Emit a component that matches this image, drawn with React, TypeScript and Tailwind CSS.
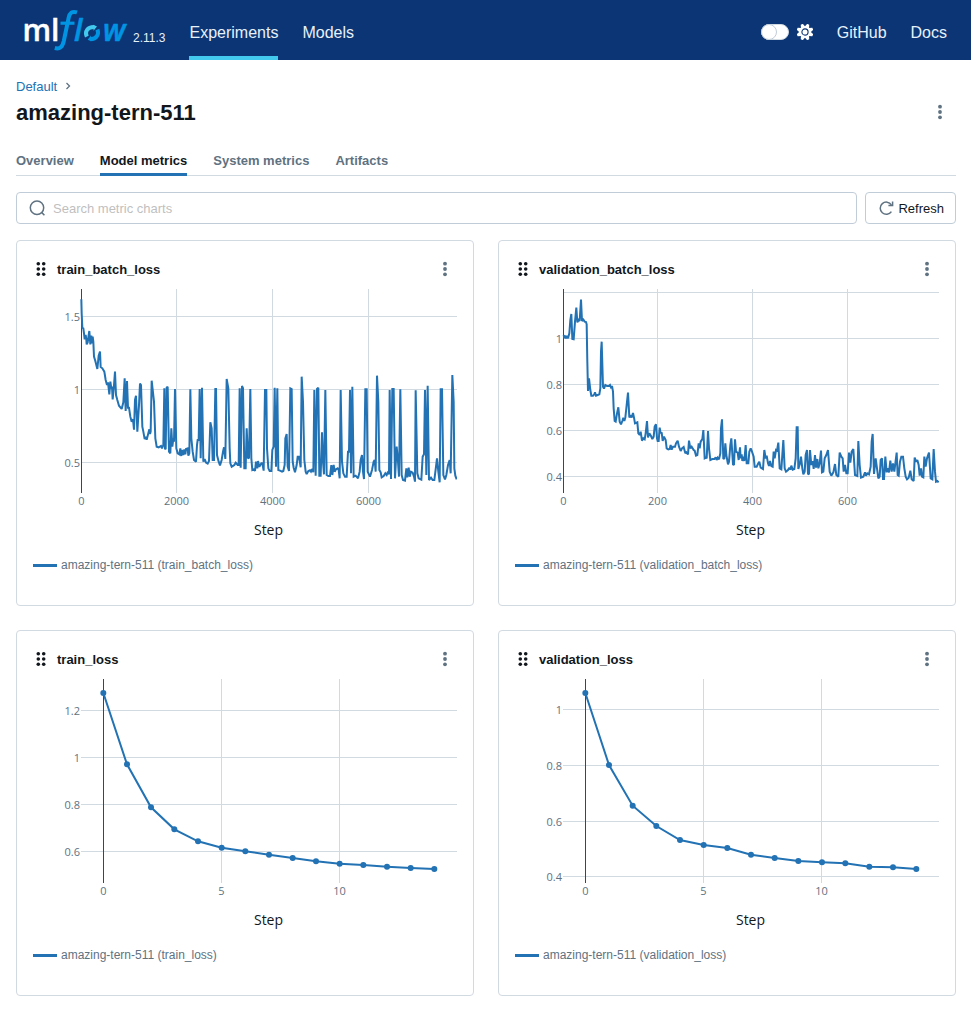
import React from "react";

type Tick = { at: number; label: string };
type Chart = {
  name: string;
  axisX: number;
  xTicks: Tick[];
  yTicks: Tick[];
  origin: [number, number];
  points: string;
  markers?: boolean;
};

const trainBatch =
  "64,43 65,85 67,128 70,130 72,145 74,163 77,150 79,163 80,178 83,172 86,150 88,138 91,178 94,152 96,175 98,155 100,170 102,215 106,228 109,240 112,252 116,212 120,200 122,246 127,250 133,260 137,285 141,300 144,292 148,328 151,290 154,310 156,305 158,343 162,300 165,260 168,330 172,345 177,362 185,372 190,352 194,280 197,378 201,288 204,368 207,368 211,395 215,410 219,403 222,434 225,345 228,332 232,440 237,360 240,296 243,300 247,425 250,440 254,462 258,455 260,464 265,445 268,433 270,447 272,440 275,287 282,350 286,460 290,485 296,487 303,483 306,490 310,480 313,310 315,490 317,493 320,308 323,305 327,500 331,505 334,430 337,485 340,460 342,470 345,312 349,490 353,505 358,508 361,490 364,513 366,495 370,510 373,493 376,508 378,492 383,490 385,512 388,505 391,313 394,460 398,500 402,525 408,530 411,480 413,465 416,465 419,312 422,520 426,308 430,530 434,522 438,533 443,536 447,528 451,412 455,430 458,525 462,525 466,312 468,312 471,510 476,530 480,541 485,525 489,500 492,487 496,522 500,282 505,310 509,490 511,535 515,545 523,540 527,533 533,540 536,540 539,310 542,548 546,303 549,310 553,550 557,550 560,430 564,520 567,518 571,312 574,520 577,555 582,553 585,558 588,530 592,550 594,528 598,545 " +
  "605,533 608,540 611,557 615,315 619,315 621,490 625,550 629,558 634,558 637,495 641,485 644,308 648,545 652,310 655,555 660,557 666,560 670,558 674,540 676,460 680,447 683,545 687,558 691,310 695,312 698,530 701,548 705,562 710,540 713,515 717,515 722,547 725,275 729,350 733,525 737,560 740,567 745,558 750,556 753,560 757,552 760,562 763,315 767,572 771,312 775,308 778,572 782,572 786,442 789,530 792,568 796,315 800,570 805,573 810,573 814,540 817,570 821,540 824,560 828,553 833,550 836,555 839,580 842,315 846,530 850,565 855,575 860,575 864,500 867,500 870,315 873,565 877,305 881,575 887,572 894,580 899,560 902,525 906,510 909,560 912,582 916,313 920,313 923,560 930,575 936,555 941,530 944,525 947,560 951,272 955,350 958,555 962,562 965,577 971,573 976,565 980,570 984,560 987,568 989,315 993,582 997,312 1001,312 1005,580 1010,485 1014,530 1017,575 1021,313 1025,570 1029,585 1035,587 1039,550 1042,577 1046,548 1049,575 1053,560 1058,563 1062,575 1065,590 1067,316 1072,565 1076,580 1084,584 1088,515 1092,508 1095,315 1099,570 1103,302 1107,585 1113,578 1118,585 1123,585 1128,545 1131,520 1135,560 1139,592 1142,313 1146,313 1150,570 1155,583 1159,570 1164,540 1169,525 1172,565 1177,270 1181,350 1183,550 1186,572 1190,583";

const validationBatch =
  "56,150 58,160 60,152 63,160 66,153 69,160 73,145 76,105 79,87 82,162 86,163 90,110 94,68 97,112 101,105 104,108 108,44 111,108 115,104 119,110 123,111 125,118 127,230 129,318 132,280 136,315 139,332 144,332 148,328 150,322 153,332 158,330 163,328 166,310 168,200 170,170 174,305 177,311 181,300 186,303 192,303 195,300 198,307 201,303 204,320 206,370 209,408 212,410 216,385 220,367 224,410 228,418 232,408 235,398 238,408 241,398 245,360 249,323 253,397 257,393 260,397 264,384 267,398 270,415 277,412 280,445 284,450 287,440 291,467 295,460 299,463 302,445 306,408 309,457 313,445 318,453 322,462 326,455 329,425 333,418 336,460 338,468 341,468 344,428 347,445 350,442 353,468 357,455 362,465 365,490 370,493 374,492 377,480 380,494 384,485 390,485 393,475 398,467 402,485 407,498 411,490 416,486 421,505 424,502 429,508 432,467 436,490 440,485 446,495 449,497 453,512 457,510 461,475 464,490 467,470 472,462 475,435 479,520 483,518 485,520 489,438 492,490 496,525 502,522 508,522 512,517 515,525 518,518 522,523 526,505 528,430 531,403 535,522 538,520 541,475 544,510 549,538 552,530 556,480 559,460 564,538 567,540 570,463 573,500 578,503 581,525 585,487 " +
  "587,520 590,508 592,528 595,515 598,528 602,480 605,535 610,535 613,500 617,490 621,500 626,515 629,545 635,545 640,535 643,530 647,548 654,552 658,495 662,520 665,512 669,535 672,543 675,528 679,543 683,545 686,500 689,520 693,495 696,497 700,473 704,550 709,553 715,465 719,550 723,560 729,555 733,548 736,554 739,542 743,554 748,552 752,520 755,427 758,427 760,552 765,535 768,515 772,550 775,568 779,560 782,510 786,495 789,566 792,568 795,495 799,540 803,528 806,552 810,510 813,548 817,522 820,550 824,535 828,497 831,562 835,560 839,520 844,510 849,495 854,560 859,572 865,562 870,537 874,570 880,575 884,503 889,515 893,520 896,560 900,540 904,565 908,565 912,503 916,533 920,500 925,492 930,570 937,573 940,468 944,540 948,578 955,575 960,562 963,572 967,565 972,568 977,545 980,470 983,447 987,567 992,520 996,550 1000,580 1004,575 1007,525 1011,520 1014,582 1017,582 1021,515 1025,562 1028,550 1032,562 1036,527 1040,560 1044,535 1048,560 1055,503 1058,570 1061,572 1065,530 1069,515 1074,515 1078,550 1082,575 1086,583 1091,578 1096,557 1100,583 1106,588 1109,518 1113,530 1117,525 1121,540 1124,572 1128,550 1131,575 1135,577 1138,515 1142,545 1146,520 1152,503 1157,580 1162,583 1166,492 1170,560 1173,590 1177,588 1181,592";

const charts: Chart[] = [
  {
    name: "train_batch_loss",
    axisX: 48.5,
    xTicks: [
      { at: 48.5, label: "0" },
      { at: 143.5, label: "2000" },
      { at: 239.5, label: "4000" },
      { at: 335.5, label: "6000" },
    ],
    yTicks: [
      { at: 35.5, label: "1.5" },
      { at: 108.5, label: "1" },
      { at: 181.5, label: "0.5" },
    ],
    origin: [27, 4],
    points: trainBatch,
  },
  {
    name: "validation_batch_loss",
    axisX: 48.5,
    xTicks: [
      { at: 48.5, label: "0" },
      { at: 142.5, label: "200" },
      { at: 237.5, label: "400" },
      { at: 332.5, label: "600" },
    ],
    yTicks: [
      { at: 11.5, label: "" },
      { at: 57.5, label: "1" },
      { at: 103.5, label: "0.8" },
      { at: 149.5, label: "0.6" },
      { at: 195.5, label: "0.4" },
    ],
    origin: [30, 4],
    points: validationBatch,
  },
  {
    name: "train_loss",
    axisX: 70.5,
    xTicks: [
      { at: 70.5, label: "0" },
      { at: 188.5, label: "5" },
      { at: 306.5, label: "10" },
    ],
    yTicks: [
      { at: 39.5, label: "1.2" },
      { at: 86.5, label: "1" },
      { at: 133.5, label: "0.8" },
      { at: 180.5, label: "0.6" },
    ],
    origin: [17, -1],
    points:
      "160,69 231,283 303,412 373,478 444,514 515,533 586,544 657,554 728,564 798,574 869,581 940,585 1011,590 1082,594 1153,597",
    markers: true,
  },
  {
    name: "validation_loss",
    axisX: 70.5,
    xTicks: [
      { at: 70.5, label: "0" },
      { at: 188.5, label: "5" },
      { at: 306.5, label: "10" },
    ],
    yTicks: [
      { at: 38.5, label: "1" },
      { at: 94.5, label: "0.8" },
      { at: 150.5, label: "0.6" },
      { at: 205.5, label: "0.4" },
    ],
    origin: [15, -1],
    points:
      "166,69 237,285 308,407 379,468 450,510 521,525 592,534 663,554 734,564 805,573 876,577 946,580 1018,590 1089,592 1159,597",
    markers: true,
  },
];

// Points are stored in thirds of a chart unit.
function toChart(points: string, [ox, oy]: [number, number]) {
  return points.split(" ").map((pair) => {
    const [x, y] = pair.split(",").map(Number);
    return [ox + x / 3, oy + y / 3] as const;
  });
}

function LineChart({ chart }: { chart: Chart }) {
  const pts = toChart(chart.points, chart.origin);
  return (
    <svg
      viewBox="0 0 424 260"
      className="block h-auto w-full font-['Open_Sans',sans-serif]"
      role="img"
      aria-label={chart.name}
    >
      <g stroke="#d1d9e1" strokeWidth="1">
        {chart.yTicks.map((t) => (
          <line key={t.at} x1="48" x2="424" y1={t.at} y2={t.at} />
        ))}
        {chart.xTicks.map((t) => (
          <line key={t.at} x1={t.at} x2={t.at} y1="8" y2="212" />
        ))}
      </g>
      <line x1={chart.axisX} x2={chart.axisX} y1="8" y2="212" stroke="#444" strokeWidth="1" />
      <polyline
        points={pts.map((p) => p.join(",")).join(" ")}
        fill="none"
        stroke="#2272b4"
        strokeWidth="2"
        strokeMiterlimit="2"
      />
      {chart.markers &&
        pts.map(([x, y]) => <circle key={x} cx={x} cy={y} r="3" fill="#2272b4" />)}
      <g fill="#5f7281" fontSize="11">
        {chart.yTicks.map((t) => (
          <text key={t.at} x="47" y={t.at + 4} textAnchor="end">
            {t.label}
          </text>
        ))}
        {chart.xTicks.map((t) => (
          <text key={t.at} x={t.at} y="224" textAnchor="middle">
            {t.label}
          </text>
        ))}
      </g>
      <text x="235.5" y="254" textAnchor="middle" fontSize="14" fill="#11171c">
        Step
      </text>
    </svg>
  );
}

function Kebab() {
  return (
    <svg viewBox="0 0 16 16" className="size-4" fill="currentColor" aria-hidden="true">
      <circle cx="8" cy="2.7" r="1.9" />
      <circle cx="8" cy="8" r="1.9" />
      <circle cx="8" cy="13.3" r="1.9" />
    </svg>
  );
}

function DragHandle() {
  return (
    <svg viewBox="0 0 16 16" className="size-4 shrink-0" fill="currentColor" aria-hidden="true">
      {[2.7, 8, 13.3].map((y) => (
        <React.Fragment key={y}>
          <circle cx="5.3" cy={y} r="1.8" />
          <circle cx="10.7" cy={y} r="1.8" />
        </React.Fragment>
      ))}
    </svg>
  );
}

function Logo() {
  return (
    <svg viewBox="-4 0 110 44" className="h-11 w-[110px]" role="img" aria-label="MLflow">
      <g fontFamily="'Open Sans', sans-serif" fontWeight="600" fontSize="30">
        <text x="-1.5" y="33" fill="#fff" stroke="#fff" strokeWidth="0.4">
          ml
        </text>
        <g fill="#0194e2" stroke="#0194e2" strokeWidth="0.6" fontStyle="italic">
          <text x="50" y="33">
            l
          </text>
          <text x="79" y="33">
            w
          </text>
        </g>
      </g>
      <g fill="none" stroke="#0194e2" strokeWidth="4">
        <path d="M53 4.4C48 2.8 45.6 5 44.6 10L39.8 33C38.4 39 36 41.4 30.8 40" />
        <path d="M36.5 15.2H50.5" strokeWidth="3.2" />
        <path d="M73.4 21.4C75.4 26.5 72.5 31.2 66.5 31.2" />
      </g>
      <path d="M62.8 28.6C60.4 23.5 63.5 18.8 70 18.9" fill="none" stroke="#43c9ed" strokeWidth="4" />
      <path d="M69.5 16.8L73 18.4L69.5 22.8Z" fill="#43c9ed" />
      <path d="M67 27.4L63.6 31.8L67 33.2Z" fill="#0194e2" />
    </svg>
  );
}

function Gear() {
  return (
    <svg viewBox="0 0 16 16" className="size-4" aria-hidden="true">
      <g fill="#fff">
        {[0, 45, 90, 135, 180, 225, 270, 315].map((a) => (
          <path key={a} d="M5.6 3.2L6.9 -0.4H9.1L10.4 3.2Z" transform={`rotate(${a + 22.5} 8 8)`} />
        ))}
        <circle cx="8" cy="8" r="5.5" />
      </g>
      <circle cx="8" cy="8" r="3.1" fill="none" stroke="#0b3574" strokeWidth="1.1" />
    </svg>
  );
}

function ChartCard({ chart }: { chart: Chart }) {
  return (
    <section className="rounded border border-[#d1d9e1] bg-white p-4">
      <div className="flex h-6 items-center">
        <DragHandle />
        <h2 className="ml-2 pt-px text-[13px] leading-5 font-bold">{chart.name}</h2>
        <button
          type="button"
          aria-label={`${chart.name} options`}
          className="mr-1 ml-auto text-[#5f7281]"
        >
          <Kebab />
        </button>
      </div>
      <LineChart chart={chart} />
      <div className="mt-4 mb-4 flex h-4 items-center gap-1">
        <span className="h-[3px] w-6 bg-[#2272b4]" />
        <span className="text-xs text-[#5f7281]">amazing-tern-511 ({chart.name})</span>
      </div>
    </section>
  );
}

const tabs = ["Overview", "Model metrics", "System metrics", "Artifacts"];

export default function App() {
  return (
    <div className="min-h-screen bg-white font-['Liberation_Sans',Arial,sans-serif] text-[13px] leading-5 text-[#11171c]">
      <header className="flex h-[60px] items-stretch bg-[#0b3574] pr-6 pl-5 text-base text-[#e7f1fb]">
        <a href="#home" className="flex items-center">
          <Logo />
        </a>
        <span className="ml-[3px] self-end pb-3.5 text-xs leading-4">2.11.3</span>
        <nav className="ml-6 flex gap-6">
          <a href="#experiments" className="flex items-center border-b-4 border-[#43c9ed] pt-2.5">
            Experiments
          </a>
          <a href="#models" className="flex items-center border-b-4 border-transparent pt-2.5">
            Models
          </a>
        </nav>
        <div className="ml-auto flex items-center gap-6 pt-1">
          <div className="flex items-center gap-2">
            <button
              type="button"
              role="switch"
              aria-checked="false"
              aria-label="Dark theme"
              className="flex h-4 w-7 items-center rounded-full border border-[#d1d9e1] bg-white"
            >
              <span className="-ml-px size-4 rounded-full border border-[#c0cdd8] bg-white" />
            </button>
            <Gear />
          </div>
          <a href="#github" className="pt-0.5">
            GitHub
          </a>
          <a href="#docs" className="pt-0.5">
            Docs
          </a>
        </div>
      </header>

      <main className="pt-4 pr-[15px] pb-4 pl-4">
        <nav aria-label="Breadcrumb" className="flex h-5 items-center gap-2">
          <a href="#default" className="pt-px text-[#2272b4]">
            Default
          </a>
          <svg viewBox="0 0 6 8" className="h-2 w-1.5" aria-hidden="true">
            <path d="M1.5 1L4.5 4L1.5 7" fill="none" stroke="#5f7281" strokeWidth="1.3" />
          </svg>
        </nav>
        <div className="flex h-8 items-center justify-between">
          <h1 className="pt-0.5 text-[22px] leading-7 font-bold">amazing-tern-511</h1>
          <button type="button" aria-label="Run options" className="mr-2 text-[#5f7281]">
            <Kebab />
          </button>
        </div>

        <div role="tablist" className="mt-4 flex h-8 gap-[26px] border-b border-[#d1d9e1]">
          {tabs.map((tab) => (
            <button
              key={tab}
              type="button"
              role="tab"
              aria-selected={tab === "Model metrics"}
              className={
                tab === "Model metrics"
                  ? "-mb-px border-b-3 border-[#2272b4] pt-1 font-bold"
                  : "-mb-px border-b-3 border-transparent pt-1 font-bold text-[#5f7281]"
              }
            >
              {tab}
            </button>
          ))}
        </div>

        <div className="mt-4 flex gap-2">
          <label className="flex h-8 flex-1 items-center gap-2 rounded border border-[#c0cdd8] px-3">
            <svg viewBox="0 0 16 16" className="size-4 shrink-0" aria-hidden="true">
              <g fill="none" stroke="#5f7281" strokeWidth="1.5">
                <circle cx="8" cy="7.8" r="6.7" />
                <path d="M12.6 12.4L15.4 15.2" />
              </g>
            </svg>
            <input
              type="text"
              aria-label="Search metric charts"
              placeholder="Search metric charts"
              className="w-full bg-transparent pt-px outline-none placeholder:text-[#bfbfbf]"
            />
          </label>
          <button
            type="button"
            className="flex h-8 items-center gap-1 rounded border border-[#c0cdd8] pr-[11px] pl-3"
          >
            <svg viewBox="0 0 16 16" className="size-4" aria-hidden="true">
              <g fill="none" stroke="#5f7281" strokeWidth="1.5">
                <path d="M13.4 11.6A6.1 6.1 0 1 1 13.4 4.8" />
                <path d="M14.6 1.4V5.6H10.4" />
              </g>
            </svg>
            <span className="pt-px">Refresh</span>
          </button>
        </div>

        <div className="mt-4 grid grid-cols-2 gap-6">
          {charts.map((chart) => (
            <ChartCard key={chart.name} chart={chart} />
          ))}
        </div>
      </main>
    </div>
  );
}
